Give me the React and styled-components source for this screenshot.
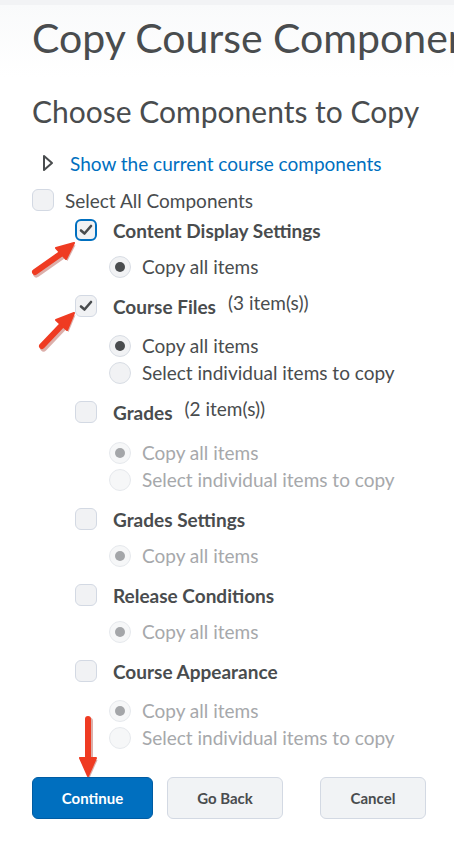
import React from 'react';
import styled, { createGlobalStyle } from 'styled-components';

const GlobalStyle = createGlobalStyle`
  body {
    margin: 0;
    background: #ffffff;
    font-family: Lato, "Open Sans", sans-serif;
    color: #494c4e;
  }
`;

const Page = styled.div`
  position: relative;
  width: 454px;
  height: 845px;
  overflow: hidden;
  background: #ffffff;
`;

const TopStrip = styled.div`
  height: 5px;
  background: #f2f3f5;
`;

const Header = styled.div`
  padding: 8px 0 0 32px;
  height: 72px;
  box-sizing: border-box;
  background: linear-gradient(#f9fafb, #ffffff);
  white-space: nowrap;
  overflow: hidden;
`;

const Title = styled.h1`
  margin: 0;
  font-size: 41px;
  font-weight: 400;
  line-height: 50px;
  color: #494c4e;
`;

const Content = styled.div`
  padding: 16px 0 0 32px;
`;

const SubTitle = styled.h2`
  margin: 0;
  font-size: 30px;
  font-weight: 400;
  line-height: 36px;
  color: #494c4e;
`;

const Disclosure = styled.div`
  display: flex;
  align-items: center;
  gap: 16px;
  margin: 22px 0 0 10px;
  height: 24px;
`;

const Link = styled.a`
  font-size: 19px;
  color: #006fbf;
  text-decoration: none;
  cursor: pointer;
`;

const Row = styled.label`
  display: flex;
  align-items: center;
  height: ${p => p.h || 30}px;
  margin-left: ${p => p.indent || 0}px;
  margin-top: ${p => p.top || 0}px;
  gap: ${p => p.gap || 11}px;
  font-size: 19px;
  color: ${p => (p.disabled ? '#a6a8ab' : '#494c4e')};
`;

const Box = styled.span`
  display: flex;
  align-items: center;
  justify-content: center;
  flex: none;
  width: 22px;
  height: 22px;
  box-sizing: border-box;
  border-radius: 6px;
  background: #f1f2f4;
  border: ${p => (p.focused ? '2px solid #006fbf' : '1px solid #d3d9e3')};
`;

const Radio = styled.span`
  display: flex;
  align-items: center;
  justify-content: center;
  flex: none;
  width: 22px;
  height: 22px;
  box-sizing: border-box;
  border-radius: 50%;
  background: ${p => (p.disabled ? '#f6f7f8' : '#f1f2f4')};
  border: 1px solid ${p => (p.disabled ? '#e6e9ed' : '#d8dde4')};
`;

const Dot = styled.span`
  width: 10px;
  height: 10px;
  border-radius: 50%;
  background: ${p => (p.disabled ? '#a4a6a9' : '#494c4e')};
`;

const Name = styled.span`
  font-size: 19px;
  font-weight: 700;
  margin-left: 5px;
`;

const Count = styled.span`
  font-size: 19px;
  font-weight: 400;
  margin-left: 1px;
  position: relative;
  top: -4px;
`;

const Buttons = styled.div`
  display: flex;
  margin-top: 26px;
`;

const Button = styled.button`
  height: 42px;
  width: ${p => p.w}px;
  margin-right: ${p => p.mr || 0}px;
  border-radius: 6px;
  font-family: Lato, "Open Sans", sans-serif;
  font-size: 15px;
  font-weight: 700;
  cursor: pointer;
  background: ${p => (p.primary ? '#006fbf' : '#f1f3f5')};
  color: ${p => (p.primary ? '#ffffff' : '#494c4e')};
  border: 1px solid ${p => (p.primary ? '#005ca3' : '#d3d9e3')};
`;

const Section = styled.div`
  margin-top: ${p => (p.first ? 0 : 11)}px;
`;

const ArrowLayer = styled.svg`
  position: absolute;
  left: 0;
  top: 0;
  pointer-events: none;
`;

const Check = () => (
  <svg width="14" height="12" viewBox="0 0 14 12">
    <path d="M2 6.5 L5.5 9.5 L12 2" fill="none" stroke="#494c4e" strokeWidth="2.6" strokeLinecap="round" strokeLinejoin="round" />
  </svg>
);

const Triangle = () => (
  <svg width="12" height="18" viewBox="0 0 12 18">
    <path d="M2 2 L10 9 L2 16 Z" fill="none" stroke="#494c4e" strokeWidth="2" strokeLinejoin="round" />
  </svg>
);

const RadioRow = ({ label, checked, disabled, top }) => (
  <Row indent={77} h={27} top={top} disabled={disabled} gap={11}>
    <Radio disabled={disabled}>{checked && <Dot disabled={disabled} />}</Radio>
    {label}
  </Row>
);

const components = [
  { name: 'Content Display Settings', checked: true, focused: true, single: true, enabled: true, top: 8 },
  { name: 'Course Files', count: '(3 item(s))', checked: true, enabled: true, top: 11 },
  { name: 'Grades', count: '(2 item(s))', top: 12 },
  { name: 'Grades Settings', single: true, top: 8 },
  { name: 'Release Conditions', single: true, top: 8 },
  { name: 'Course Appearance', top: 11 },
];

const Arrow = ({ d }) => (
  <g>
    <path d={d} fill="none" stroke="#9a1a0c" strokeOpacity="0.35" strokeWidth="7" strokeLinecap="round" transform="translate(1.5,2)" />
    <path d={d} fill="none" stroke="#ef3b22" strokeWidth="6" strokeLinecap="round" />
  </g>
);

const Head = ({ points }) => (
  <g>
    <polygon points={points} fill="#9a1a0c" fillOpacity="0.35" transform="translate(1.5,2)" />
    <polygon points={points} fill="#ef3b22" stroke="#ef3b22" strokeWidth="2" strokeLinejoin="round" />
  </g>
);

export default function App() {
  return (
    <Page>
      <GlobalStyle />
      <TopStrip />
      <Header>
        <Title>Copy Course Components</Title>
      </Header>
      <Content>
        <SubTitle>Choose Components to Copy</SubTitle>
        <Disclosure>
          <Triangle />
          <Link>Show the current course components</Link>
        </Disclosure>
        <Row top={10}>
          <Box />
          Select All Components
        </Row>
        {components.map((c, i) => (
          <Section key={c.name} first={i === 0}>
            <Row indent={43} gap={11}>
              <Box focused={c.focused}>{c.checked && <Check />}</Box>
              <Name>{c.name}</Name>
              {c.count && <Count>{c.count}</Count>}
            </Row>
            <RadioRow label="Copy all items" checked disabled={!c.enabled} top={c.top} />
            {!c.single && <RadioRow label="Select individual items to copy" disabled={!c.enabled} />}
          </Section>
        ))}
        <Buttons>
          <Button primary w={121} mr={14}>Continue</Button>
          <Button w={116} mr={37}>Go Back</Button>
          <Button w={106}>Cancel</Button>
        </Buttons>
      </Content>
      <ArrowLayer width="454" height="845">
        <Arrow d="M35 272 L62 253" />
        <Head points="74,243 56,248 66,259" />
        <Arrow d="M42 346 L62 325" />
        <Head points="74,313 56,320 67,330" />
        <Arrow d="M88 719 L88 758" />
        <Head points="88,776 80,758 96,758" />
      </ArrowLayer>
    </Page>
  );
}
